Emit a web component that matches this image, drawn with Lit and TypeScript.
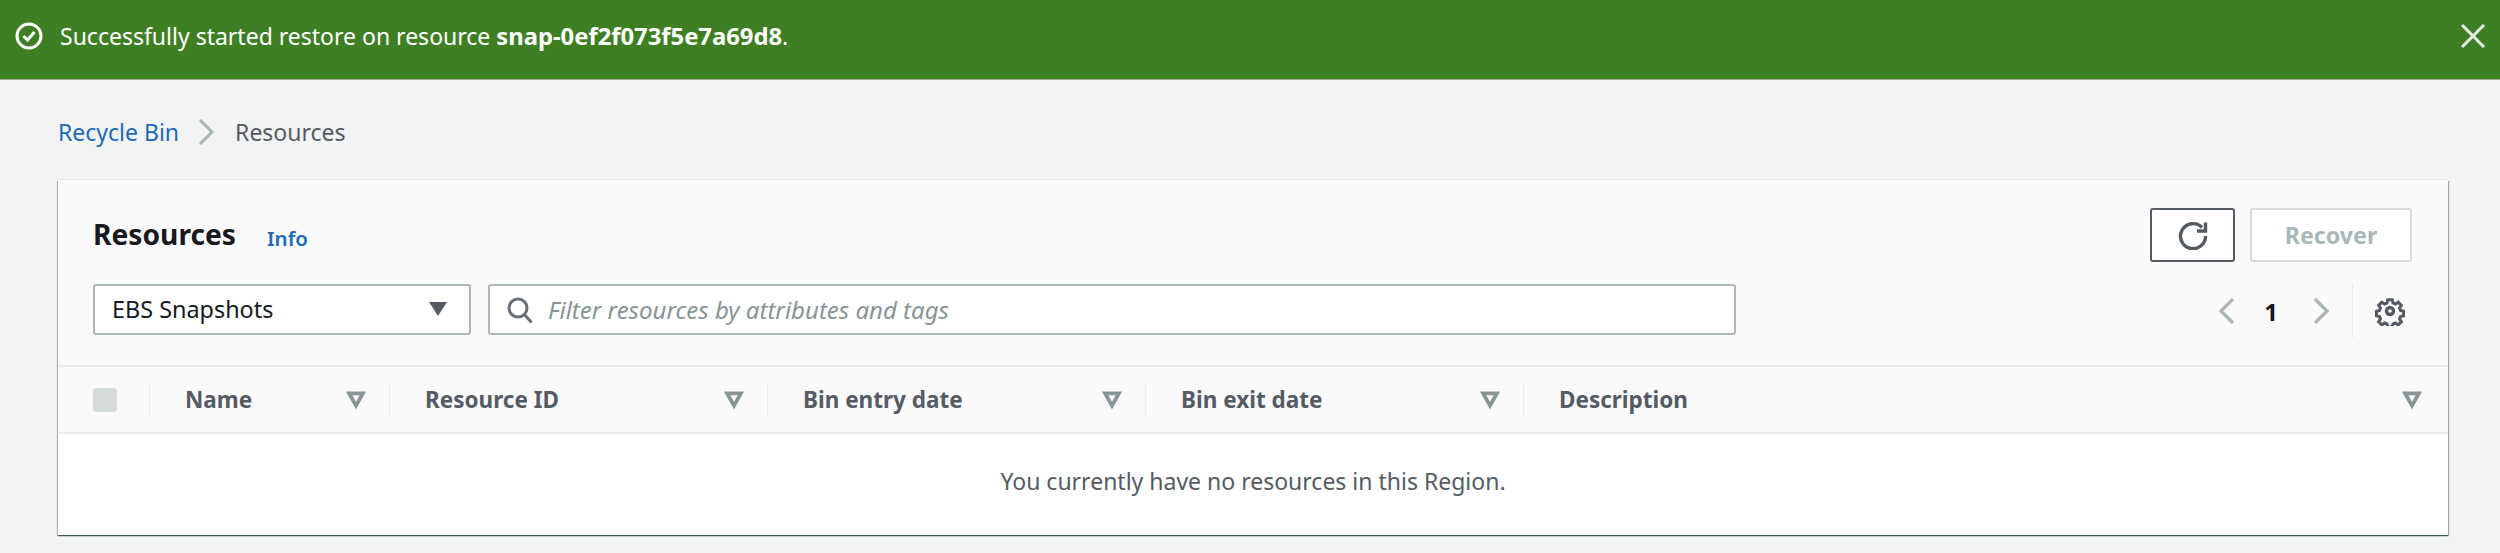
import { LitElement, html, css, svg } from "lit";
import { customElement } from "lit/decorators.js";

const filterIcon = svg`<svg class="sort" viewBox="0 0 18 16"><path d="M2.8 2h12.4L9 13z" fill="none" stroke="#879596" stroke-width="3.4" stroke-linejoin="miter"/></svg>`;

@customElement("app-root")
export class AppRoot extends LitElement {
  static styles = css`
    :host { display: block; width: 2500px; height: 553px; background: #f2f3f3; overflow: hidden; font-family: "Noto Sans", sans-serif; font-size: 22px; color: #16191f; }
    .banner { height: 80px; box-sizing: border-box; background: #3f7f24; border-bottom: 1px solid #9aa79a; color: #fff; display: flex; align-items: center; padding: 0 15px 8px 15px; }
    .banner .check { width: 28px; height: 28px; margin-right: 17px; flex: none; }
    .banner .msg { flex: 1; font-size: 23px; }
    .banner b { font-weight: 700; font-size: 23.8px; }
    .banner .close { width: 24px; height: 24px; }
    .crumbs { height: 100px; padding: 4px 58px 0; box-sizing: border-box; display: flex; align-items: center; font-size: 23px; color: #545b64; }
    .crumbs a { color: #1f6ab5; }
    .crumbs svg { width: 18px; height: 26px; margin: 0 20px 0 18px; }
    .card { margin: 0 52px 0 58px; height: 355px; background: #fafafa; box-shadow: 0 1px 1px 0 rgba(0,28,36,.5), 1px 1px 1px 0 rgba(0,28,36,.3), -1px 1px 1px 0 rgba(0,28,36,.22), 0 -1px 0 0 #e6e9e9; display: flex; flex-direction: column; }
    .head { height: 187px; box-sizing: border-box; padding: 28px 35px 0; display: flex; flex-direction: column; border-bottom: 2px solid #eaeded; }
    .row1 { display: flex; align-items: flex-start; height: 76px; }
    .title { font-size: 28.2px; font-weight: 700; line-height: 52px; }
    .info { color: #1f6ab5; font-size: 20.5px; font-weight: 600; line-height: 60px; margin-left: 31px; flex: 1; }
    .btn { height: 54px; box-sizing: border-box; border-radius: 3px; background: #fff; display: flex; align-items: center; justify-content: center; }
    .refresh { width: 85px; border: 2px solid #545b64; margin-right: 15px; }
    .refresh svg { width: 30px; height: 30px; }
    .recover { width: 162px; border: 2px solid #d5dbdb; color: #aab7b8; font-weight: 700; font-size: 23.2px; margin-right: 1px; }
    .row2 { display: flex; align-items: flex-start; }
    .select { width: 378px; height: 51px; box-sizing: border-box; border: 2px solid #aab7b8; border-radius: 3px; background: #fff; display: flex; align-items: center; justify-content: space-between; padding: 0 22px 2px 17px; margin-right: 17px; font-size: 23.4px; }
    .select svg { width: 18px; height: 14px; }
    .filter { width: 1248px; height: 51px; box-sizing: border-box; border: 2px solid #aab7b8; border-radius: 3px; background: #fff; display: flex; align-items: center; padding: 0 16px; font-size: 24px; font-style: italic; color: #879596; }
    .filter svg { width: 28px; height: 28px; margin-right: 14px; }
    .pager { margin-left: auto; display: flex; align-items: center; height: 54px; }
    .pager .chev { width: 26px; height: 28px; }
    .pager b { font-size: 24px; width: 70px; text-align: center; }
    .pager .sep { width: 1px; height: 54px; background: #eaeded; margin: 0 22px 0 20px; }
    .pager .gear { width: 30px; height: 30px; margin-right: 8px; }
    .thead { height: 67px; box-sizing: border-box; display: grid; grid-template-columns: 92px 240px 378px 378px 378px 1fr; align-items: center; border-bottom: 2px solid #eaeded; font-weight: 700; color: #545b64; font-size: 22.5px; }
    .cb { padding-left: 35px; height: 32px; display: flex; align-items: center; border-right: 1px solid #eaeded; }
    .cb i { display: block; width: 24px; height: 24px; border-radius: 3px; background: #d5dbdb; }
    .th { height: 32px; display: flex; align-items: center; justify-content: space-between; padding: 0 23px 0 35px; border-right: 1px solid #eaeded; }
    .th:last-child { border-right: 0; padding-right: 26px; }
    .sort { width: 20px; height: 18px; flex: none; }
    .empty { flex: 1; background: #fff; display: flex; align-items: center; justify-content: center; color: #545b64; font-size: 23px; padding-bottom: 7px; }
  `;

  render() {
    const cols = ["Name", "Resource ID", "Bin entry date", "Bin exit date", "Description"];
    return html`
      <div class="banner">
        <svg class="check" viewBox="0 0 28 28" fill="none" stroke="#fff" stroke-width="3"><circle cx="14" cy="14" r="12"/><path d="M8.5 14l4 4 7-8"/></svg>
        <div class="msg">Successfully started restore on resource <b>snap-0ef2f073f5e7a69d8</b>.</div>
        <svg class="close" viewBox="0 0 24 24" fill="none" stroke="#e6eae6" stroke-width="3"><path d="M1 1l22 22M23 1L1 23"/></svg>
      </div>
      <div class="crumbs">
        <a>Recycle Bin</a>
        <svg viewBox="0 0 18 26" fill="none" stroke="#aab7b8" stroke-width="3"><path d="M3 1l12 12L3 25"/></svg>
        <span>Resources</span>
      </div>
      <div class="card">
        <div class="head">
          <div class="row1">
            <div class="title">Resources</div>
            <div class="info">Info</div>
            <div class="btn refresh">
              <svg viewBox="0 0 30 30" fill="none" stroke="#545b64" stroke-width="3.4"><path d="M24 7.5A12.5 12.5 0 1 0 27.5 16"/><path d="M27.5 2.5v8.5H19" stroke-linejoin="miter"/></svg>
            </div>
            <div class="btn recover">Recover</div>
          </div>
          <div class="row2">
            <div class="select">EBS Snapshots<svg viewBox="0 0 18 14"><path d="M0 0h18L9 14z" fill="#545b64"/></svg></div>
            <div class="filter">
              <svg viewBox="0 0 28 28" fill="none" stroke="#687078" stroke-width="3"><circle cx="12" cy="12" r="9"/><path d="M18.5 18.5l7 8"/></svg>
              Filter resources by attributes and tags
            </div>
            <div class="pager">
              <svg class="chev" viewBox="0 0 26 28" fill="none" stroke="#aab7b8" stroke-width="3.2"><path d="M23 2L11 14l12 12"/></svg>
              <b>1</b>
              <svg class="chev" viewBox="0 0 26 28" fill="none" stroke="#aab7b8" stroke-width="3.2"><path d="M9 2l12 12L9 26"/></svg>
              <div class="sep"></div>
              <svg class="gear" viewBox="0 0 30 30" fill="none" stroke="#545b64" stroke-width="3.4"><circle cx="15" cy="15" r="3.5"/><path d="M12.5 2.5h5l.8 3.6 2.6 1.1 3.2-2 3.5 3.5-2 3.2 1.1 2.6 3.3.8v5l-3.3.8-1.1 2.6 2 3.2-3.5 3.5-3.2-2-2.6 1.1-.8 3.4h-5l-.8-3.4-2.6-1.1-3.2 2-3.5-3.5 2-3.2-1.1-2.6-3.3-.8v-5l3.3-.8 1.1-2.6-2-3.2 3.5-3.5 3.2 2 2.6-1.1z" transform="translate(1.5 1.5) scale(.9)"/></svg>
            </div>
          </div>
        </div>
        <div class="thead">
          <div class="cb"><i></i></div>
          ${cols.map((c) => html`<div class="th"><span>${c}</span>${filterIcon}</div>`)}
        </div>
        <div class="empty">You currently have no resources in this Region.</div>
      </div>
    `;
  }
}
